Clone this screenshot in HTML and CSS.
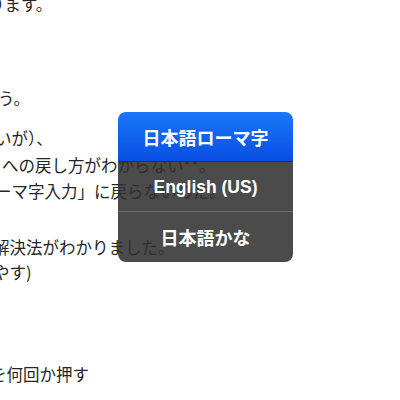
FILE: index.html
```html
<!DOCTYPE html>
<html lang="ja">
<head>
<meta charset="utf-8">
<link rel="stylesheet" href="styles.css">
</head>
<body>
<div class="article">
  <p class="para first"><span class="line o1">ります。</span></p>
  <p class="para gap-a"><span class="line o2">う。</span></p>
  <p class="para gap-b">
    <span class="line o3">いが）、</span>
    <span class="line o4">への戻し方がわからない**。</span>
    <span class="line o5">ーマ字入力」に戻らないのだ。</span>
  </p>
  <p class="para gap-c">
    <span class="line o6">解決法がわかりました。</span>
    <span class="line o7">やす)</span>
  </p>
  <p class="para gap-d"><span class="line o8">を何回か押す</span></p>
</div>
<div class="menu">
  <div class="item selected">日本語ローマ字</div>
  <div class="item en">English (US)</div>
  <div class="item last">日本語かな</div>
</div>
</body>
</html>
```
FILE: styles.css
```css
html, body {
  margin: 0;
  padding: 0;
  background: #fff;
  width: 400px;
  height: 400px;
  overflow: hidden;
}
body {
  position: relative;
  font-family: "Noto Sans CJK JP", "Noto Sans", sans-serif;
  color: #262626;
  font-size: 16.5px;
  line-height: 26px;
}
.article {
  display: flex;
  flex-direction: column;
}
.para {
  margin: 0;
  display: flex;
  flex-direction: column;
}
.line {
  display: block;
  white-space: nowrap;
}
.first { margin-top: -9px; }
.gap-a { margin-top: 68px; }
.gap-b { margin-top: 14px; }
.gap-b .line { line-height: 26.5px; }
.gap-c { margin-top: 30px; }
.gap-c .line { line-height: 25px; }
.gap-d { margin-top: 76px; }
.o1 { margin-left: -12px; }
.o2 { margin-left: -2px; }
.o3 { margin-left: -5px; }
.o4 { margin-left: 2px; }
.o5 { margin-left: -5px; }
.o6 { margin-left: -7px; }
.o7 { margin-left: -7px; }
.o8 { margin-left: -10px; }

.menu {
  position: absolute;
  left: 118px;
  top: 112px;
  width: 175px;
  border-radius: 8px;
  overflow: hidden;
  display: flex;
  flex-direction: column;
  color: #fff;
  font-size: 18px;
}
.item {
  height: 50px;
  display: flex;
  align-items: center;
  justify-content: center;
  background: rgba(48, 48, 48, 0.87);
  font-family: "Noto Sans CJK JP", sans-serif;
  font-weight: 700;
  box-sizing: border-box;
}
.selected {
  background: linear-gradient(#1a78f7, #0a4de3);
  border-bottom: 1px solid #26303f;
}
.en {
  font-family: "Liberation Sans", Arial, sans-serif;
  font-weight: bold;
  font-size: 17.5px;
  border-bottom: 1px solid #6e6e6e;
}
```
